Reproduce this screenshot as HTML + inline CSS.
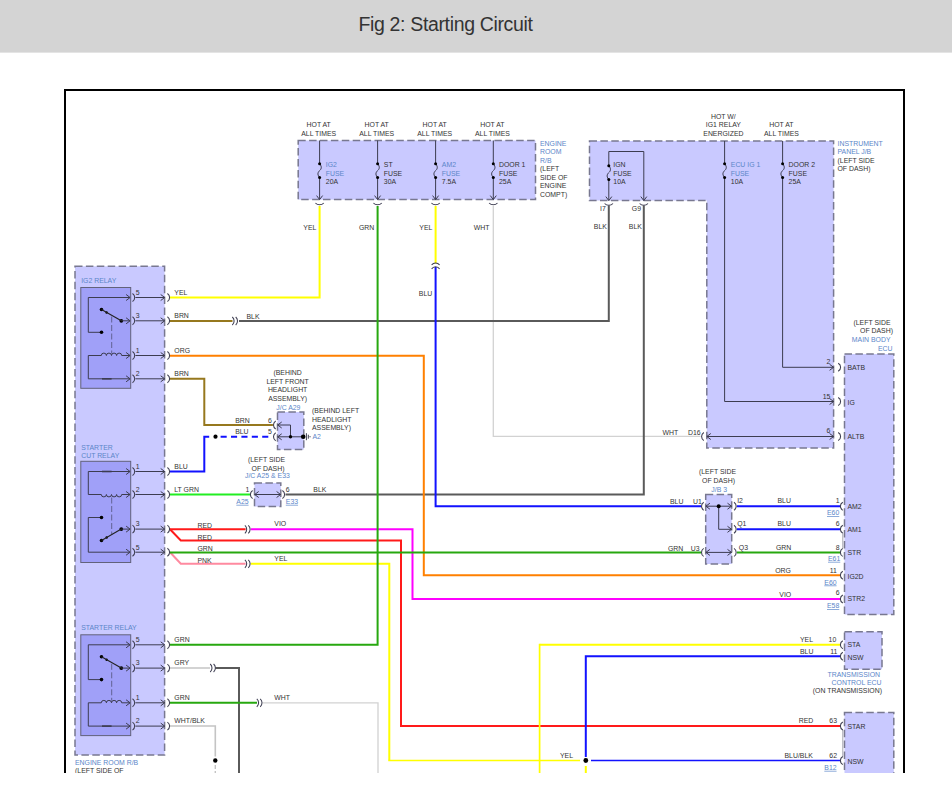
<!DOCTYPE html>
<html><head><meta charset="utf-8"><title>Fig 2: Starting Circuit</title>
<style>
html,body{margin:0;padding:0;background:#fff;}
body{width:952px;height:804px;overflow:hidden;position:relative;font-family:"Liberation Sans",sans-serif;}
#hdr{position:absolute;left:0;top:0;width:952px;height:52px;background:#d4d4d4;border-bottom:1px solid #e4e4e4;}
#ttl{position:absolute;left:0;top:12px;width:891px;text-align:center;font-size:19.5px;color:#333333;letter-spacing:-0.35px;line-height:24px;}
svg{position:absolute;left:0;top:0;}
svg text{font-family:"Liberation Sans",sans-serif;}
</style></head><body>
<div id="hdr"></div><div id="ttl">Fig 2: Starting Circuit</div>
<svg width="952" height="804" viewBox="0 0 952 804">
<defs><clipPath id="c"><rect x="0" y="0" width="952" height="773"/></clipPath></defs>
<g clip-path="url(#c)">
<path d="M65,775 V90 H904 V775" fill="none" stroke="#000" stroke-width="2"/>
<rect x="75" y="266.3" width="89.6" height="488.7" fill="#c9c9ff" stroke="#787890" stroke-width="1.5" stroke-dasharray="7.5 3.4"/>
<rect x="298.2" y="140.5" width="237.3" height="59.1" fill="#c9c9ff" stroke="#787890" stroke-width="1.5" stroke-dasharray="7.5 3.4"/>
<path d="M589.5,141 H833.6 V448 H706.8 V200.6 H589.5 Z" fill="#c9c9ff" stroke="#787890" stroke-width="1.5" stroke-dasharray="7.5 3.4"/>
<rect x="844.5" y="354" width="49.3" height="260.5" fill="#c9c9ff" stroke="#787890" stroke-width="1.5" stroke-dasharray="7.5 3.4"/>
<rect x="705.7" y="494.6" width="26" height="69.4" fill="#c9c9ff" stroke="#787890" stroke-width="1.5" stroke-dasharray="7.5 3.4"/>
<rect x="277.5" y="412" width="26.3" height="37.6" fill="#c9c9ff" stroke="#787890" stroke-width="1.5" stroke-dasharray="7.5 3.4"/>
<rect x="254.5" y="483" width="26.3" height="23.5" fill="#c9c9ff" stroke="#787890" stroke-width="1.5" stroke-dasharray="7.5 3.4"/>
<rect x="844.5" y="631.8" width="37.5" height="37.5" fill="#c9c9ff" stroke="#787890" stroke-width="1.5" stroke-dasharray="7.5 3.4"/>
<rect x="844.5" y="712.5" width="49.3" height="77.5" fill="#c9c9ff" stroke="#787890" stroke-width="1.5" stroke-dasharray="7.5 3.4"/>
<path d="M493.3,206 L493.3,436.4 L700.5,436.4" fill="none" stroke="#d2d2d2" stroke-width="1.3" stroke-linejoin="miter" stroke-linecap="butt"/>
<path d="M608.8,205.5 L608.8,320.9 L239,320.9" fill="none" stroke="#5a5a5a" stroke-width="2" stroke-linejoin="miter" stroke-linecap="butt"/>
<path d="M170,321 L232.5,321" fill="none" stroke="#96781e" stroke-width="2" stroke-linejoin="miter" stroke-linecap="butt"/>
<path d="M643.8,205.5 L643.8,494.5 L285.5,494.5" fill="none" stroke="#5a5a5a" stroke-width="2" stroke-linejoin="miter" stroke-linecap="butt"/>
<path d="M170,355.8 L423.8,355.8 L423.8,575.3 L840.5,575.3" fill="none" stroke="#ff8000" stroke-width="2" stroke-linejoin="miter" stroke-linecap="butt"/>
<path d="M170,378.8 L204.3,378.8 L204.3,425 L272.9,425" fill="none" stroke="#96781e" stroke-width="2" stroke-linejoin="miter" stroke-linecap="butt"/>
<path d="M170,471.5 L204.3,471.5 L204.3,436.7 L209.2,436.7" fill="none" stroke="#1212ff" stroke-width="2" stroke-linejoin="miter" stroke-linecap="butt"/>
<path d="M220.6,436.7 L269.2,436.7" fill="none" stroke="#1212ff" stroke-width="1.9" stroke-linejoin="miter" stroke-linecap="butt" stroke-dasharray="6.1 4.3"/>
<circle cx="215.5" cy="436.7" r="2.1" fill="#000"/>
<path d="M170,494.5 L250.5,494.5" fill="none" stroke="#22ee22" stroke-width="2" stroke-linejoin="miter" stroke-linecap="butt"/>
<path d="M250.8,529.3 L412.5,529.3 L412.5,599 L840.5,599" fill="none" stroke="#ff00ff" stroke-width="2" stroke-linejoin="miter" stroke-linecap="butt"/>
<path d="M170,529.3 L180.8,540.4 L401,540.4 L401,726 L840.5,726" fill="none" stroke="#ff1a1a" stroke-width="2" stroke-linejoin="miter" stroke-linecap="butt"/>
<path d="M170,529.3 L245.6,529.3" fill="none" stroke="#ff1a1a" stroke-width="2" stroke-linejoin="miter" stroke-linecap="butt"/>
<path d="M170,552.3 L180.8,563.8 L245.6,563.8" fill="none" stroke="#ff8aa0" stroke-width="2" stroke-linejoin="miter" stroke-linecap="butt"/>
<path d="M250.8,563.8 L389.3,563.8 L389.3,760.5" fill="none" stroke="#ffff00" stroke-width="2" stroke-linejoin="miter" stroke-linecap="butt"/>
<path d="M388.3,760.5 L580,760.5" fill="none" stroke="#ffff00" stroke-width="1.7" stroke-linejoin="miter" stroke-linecap="butt"/>
<path d="M170,552.4 L701,552.4" fill="none" stroke="#27a80f" stroke-width="2" stroke-linejoin="miter" stroke-linecap="butt"/>
<path d="M319.6,206 L319.6,297.5 L170,297.5" fill="none" stroke="#ffff00" stroke-width="2" stroke-linejoin="miter" stroke-linecap="butt"/>
<path d="M435.6,206 L435.6,263.4" fill="none" stroke="#ffff00" stroke-width="2" stroke-linejoin="miter" stroke-linecap="butt"/>
<path d="M435.6,267 L435.6,506.2 L701,506.2" fill="none" stroke="#1212ff" stroke-width="2" stroke-linejoin="miter" stroke-linecap="butt"/>
<path d="M377.6,206 L377.6,644.8 L170,644.8" fill="none" stroke="#27a80f" stroke-width="2" stroke-linejoin="miter" stroke-linecap="butt"/>
<path d="M170,668 L210,668" fill="none" stroke="#c4c4c4" stroke-width="1.6" stroke-linejoin="miter" stroke-linecap="butt"/>
<path d="M215.5,668 L239,668 L239,773" fill="none" stroke="#5a5a5a" stroke-width="2" stroke-linejoin="miter" stroke-linecap="butt"/>
<path d="M170,702.8 L257,702.8" fill="none" stroke="#27a80f" stroke-width="2" stroke-linejoin="miter" stroke-linecap="butt"/>
<path d="M262.5,702.8 L378,702.8 L378,773" fill="none" stroke="#d2d2d2" stroke-width="1.3" stroke-linejoin="miter" stroke-linecap="butt"/>
<path d="M170,726 L215.3,726 L215.3,756.5" fill="none" stroke="#c4c4c4" stroke-width="1.6" stroke-linejoin="miter" stroke-linecap="butt"/>
<path d="M215.3,765 L215.3,773" fill="none" stroke="#c4c4c4" stroke-width="1.4" stroke-linejoin="miter" stroke-linecap="butt" stroke-dasharray="4 2"/>
<circle cx="215.3" cy="760.5" r="2.2" fill="#000"/>
<path d="M840.5,644.8 L539.6,644.8" fill="none" stroke="#ffff00" stroke-width="2" stroke-linejoin="miter" stroke-linecap="butt"/>
<path d="M539.6,643.8 L539.6,773" fill="none" stroke="#ffff00" stroke-width="1.7" stroke-linejoin="miter" stroke-linecap="butt"/>
<path d="M840.5,656.3 L585.8,656.3 L585.8,757" fill="none" stroke="#1212ff" stroke-width="2" stroke-linejoin="miter" stroke-linecap="butt"/>
<path d="M591,760.5 L840.5,760.5" fill="none" stroke="#1212ff" stroke-width="1.6" stroke-linejoin="miter" stroke-linecap="butt"/>
<path d="M585.8,766 L585.8,773" fill="none" stroke="#ffff00" stroke-width="2" stroke-linejoin="miter" stroke-linecap="butt"/>
<circle cx="585.8" cy="760.5" r="2.4" fill="#000"/>
<path d="M737,506.2 L840.5,506.2" fill="none" stroke="#1212ff" stroke-width="2" stroke-linejoin="miter" stroke-linecap="butt"/>
<path d="M737,529.3 L840.5,529.3" fill="none" stroke="#1212ff" stroke-width="2" stroke-linejoin="miter" stroke-linecap="butt"/>
<path d="M737,552.4 L840.5,552.4" fill="none" stroke="#27a80f" stroke-width="2" stroke-linejoin="miter" stroke-linecap="butt"/>
<rect x="80.8" y="287.5" width="49.9" height="100.8" fill="#a0a0f8" stroke="#62627a" stroke-width="1"/>
<path d="M126.1,294.5 L130.1,297.5 L126.1,300.5" fill="none" stroke="#3c3c50" stroke-width="1" stroke-linejoin="miter" stroke-linecap="butt"/>
<path d="M132.5,293.5 A4.74,4.74 0 0 1 132.5,301.5" fill="none" stroke="#3c3c50" stroke-width="1.05"/>
<path d="M135.4,297.5 L164.4,297.5" fill="none" stroke="#3c3c50" stroke-width="1" stroke-linejoin="miter" stroke-linecap="butt"/>
<path d="M160.7,294.5 L164.7,297.5 L160.7,300.5" fill="none" stroke="#3c3c50" stroke-width="1" stroke-linejoin="miter" stroke-linecap="butt"/>
<path d="M167.4,293.5 A4.74,4.74 0 0 1 167.4,301.5" fill="none" stroke="#3c3c50" stroke-width="1.05"/>
<text x="135.8" y="294.5" fill="#333333" font-size="6.9">5</text>
<path d="M126.1,317.8 L130.1,320.8 L126.1,323.8" fill="none" stroke="#3c3c50" stroke-width="1" stroke-linejoin="miter" stroke-linecap="butt"/>
<path d="M132.5,316.8 A4.74,4.74 0 0 1 132.5,324.8" fill="none" stroke="#3c3c50" stroke-width="1.05"/>
<path d="M135.4,320.8 L164.4,320.8" fill="none" stroke="#3c3c50" stroke-width="1" stroke-linejoin="miter" stroke-linecap="butt"/>
<path d="M160.7,317.8 L164.7,320.8 L160.7,323.8" fill="none" stroke="#3c3c50" stroke-width="1" stroke-linejoin="miter" stroke-linecap="butt"/>
<path d="M167.4,316.8 A4.74,4.74 0 0 1 167.4,324.8" fill="none" stroke="#3c3c50" stroke-width="1.05"/>
<text x="135.8" y="317.8" fill="#333333" font-size="6.9">3</text>
<path d="M126.1,352.5 L130.1,355.5 L126.1,358.5" fill="none" stroke="#3c3c50" stroke-width="1" stroke-linejoin="miter" stroke-linecap="butt"/>
<path d="M132.5,351.5 A4.74,4.74 0 0 1 132.5,359.5" fill="none" stroke="#3c3c50" stroke-width="1.05"/>
<path d="M135.4,355.5 L164.4,355.5" fill="none" stroke="#3c3c50" stroke-width="1" stroke-linejoin="miter" stroke-linecap="butt"/>
<path d="M160.7,352.5 L164.7,355.5 L160.7,358.5" fill="none" stroke="#3c3c50" stroke-width="1" stroke-linejoin="miter" stroke-linecap="butt"/>
<path d="M167.4,351.5 A4.74,4.74 0 0 1 167.4,359.5" fill="none" stroke="#3c3c50" stroke-width="1.05"/>
<text x="135.8" y="352.5" fill="#333333" font-size="6.9">1</text>
<path d="M126.1,375.8 L130.1,378.8 L126.1,381.8" fill="none" stroke="#3c3c50" stroke-width="1" stroke-linejoin="miter" stroke-linecap="butt"/>
<path d="M132.5,374.8 A4.74,4.74 0 0 1 132.5,382.8" fill="none" stroke="#3c3c50" stroke-width="1.05"/>
<path d="M135.4,378.8 L164.4,378.8" fill="none" stroke="#3c3c50" stroke-width="1" stroke-linejoin="miter" stroke-linecap="butt"/>
<path d="M160.7,375.8 L164.7,378.8 L160.7,381.8" fill="none" stroke="#3c3c50" stroke-width="1" stroke-linejoin="miter" stroke-linecap="butt"/>
<path d="M167.4,374.8 A4.74,4.74 0 0 1 167.4,382.8" fill="none" stroke="#3c3c50" stroke-width="1.05"/>
<text x="135.8" y="375.8" fill="#333333" font-size="6.9">2</text>
<path d="M130,297.5 L88.3,297.5 L88.3,332.3 L101.5,332.3" fill="none" stroke="#3c3c50" stroke-width="1" stroke-linejoin="miter" stroke-linecap="butt"/>
<circle cx="101.5" cy="332.3" r="1.8" fill="#000"/>
<circle cx="101.5" cy="309.5" r="1.8" fill="#000"/>
<circle cx="121.3" cy="320.8" r="1.9" fill="#000"/>
<circle cx="106.6" cy="312.5" r="1.2" fill="#000"/>
<path d="M101.5,309.5 L121.3,320.8" fill="none" stroke="#222" stroke-width="1.1" stroke-linejoin="miter" stroke-linecap="butt"/>
<path d="M121.3,320.8 L130,320.8" fill="none" stroke="#3c3c50" stroke-width="1" stroke-linejoin="miter" stroke-linecap="butt"/>
<path d="M111.7,316.5 L111.7,353.5" fill="none" stroke="#50507a" stroke-width="0.8" stroke-linejoin="miter" stroke-linecap="butt" stroke-dasharray="6 2.5"/>
<path d="M88.3,355.5 H101.3 A2.55,2.4 0 0 1 106.4,355.5 A2.55,2.4 0 0 1 111.5,355.5 A2.55,2.4 0 0 1 116.6,355.5 A2.55,2.4 0 0 1 121.7,355.5 H130" fill="none" stroke="#3c3c50" stroke-width="1"/>
<path d="M88.3,355.5 L88.3,378.8 L130,378.8" fill="none" stroke="#3c3c50" stroke-width="1" stroke-linejoin="miter" stroke-linecap="butt"/>
<path d="M102,378.8 L111.6,378.8" fill="none" stroke="#3c3c50" stroke-width="1.6" stroke-linejoin="miter" stroke-linecap="butt"/>
<rect x="80.8" y="634.8" width="49.9" height="100.8" fill="#a0a0f8" stroke="#62627a" stroke-width="1"/>
<path d="M126.1,641.8 L130.1,644.8 L126.1,647.8" fill="none" stroke="#3c3c50" stroke-width="1" stroke-linejoin="miter" stroke-linecap="butt"/>
<path d="M132.5,640.8 A4.74,4.74 0 0 1 132.5,648.8" fill="none" stroke="#3c3c50" stroke-width="1.05"/>
<path d="M135.4,644.8 L164.4,644.8" fill="none" stroke="#3c3c50" stroke-width="1" stroke-linejoin="miter" stroke-linecap="butt"/>
<path d="M160.7,641.8 L164.7,644.8 L160.7,647.8" fill="none" stroke="#3c3c50" stroke-width="1" stroke-linejoin="miter" stroke-linecap="butt"/>
<path d="M167.4,640.8 A4.74,4.74 0 0 1 167.4,648.8" fill="none" stroke="#3c3c50" stroke-width="1.05"/>
<text x="135.8" y="641.8" fill="#333333" font-size="6.9">5</text>
<path d="M126.1,665.1 L130.1,668.1 L126.1,671.1" fill="none" stroke="#3c3c50" stroke-width="1" stroke-linejoin="miter" stroke-linecap="butt"/>
<path d="M132.5,664.1 A4.74,4.74 0 0 1 132.5,672.1" fill="none" stroke="#3c3c50" stroke-width="1.05"/>
<path d="M135.4,668.1 L164.4,668.1" fill="none" stroke="#3c3c50" stroke-width="1" stroke-linejoin="miter" stroke-linecap="butt"/>
<path d="M160.7,665.1 L164.7,668.1 L160.7,671.1" fill="none" stroke="#3c3c50" stroke-width="1" stroke-linejoin="miter" stroke-linecap="butt"/>
<path d="M167.4,664.1 A4.74,4.74 0 0 1 167.4,672.1" fill="none" stroke="#3c3c50" stroke-width="1.05"/>
<text x="135.8" y="665.1" fill="#333333" font-size="6.9">3</text>
<path d="M126.1,699.8 L130.1,702.8 L126.1,705.8" fill="none" stroke="#3c3c50" stroke-width="1" stroke-linejoin="miter" stroke-linecap="butt"/>
<path d="M132.5,698.8 A4.74,4.74 0 0 1 132.5,706.8" fill="none" stroke="#3c3c50" stroke-width="1.05"/>
<path d="M135.4,702.8 L164.4,702.8" fill="none" stroke="#3c3c50" stroke-width="1" stroke-linejoin="miter" stroke-linecap="butt"/>
<path d="M160.7,699.8 L164.7,702.8 L160.7,705.8" fill="none" stroke="#3c3c50" stroke-width="1" stroke-linejoin="miter" stroke-linecap="butt"/>
<path d="M167.4,698.8 A4.74,4.74 0 0 1 167.4,706.8" fill="none" stroke="#3c3c50" stroke-width="1.05"/>
<text x="135.8" y="699.8" fill="#333333" font-size="6.9">1</text>
<path d="M126.1,723.1 L130.1,726.1 L126.1,729.1" fill="none" stroke="#3c3c50" stroke-width="1" stroke-linejoin="miter" stroke-linecap="butt"/>
<path d="M132.5,722.1 A4.74,4.74 0 0 1 132.5,730.1" fill="none" stroke="#3c3c50" stroke-width="1.05"/>
<path d="M135.4,726.1 L164.4,726.1" fill="none" stroke="#3c3c50" stroke-width="1" stroke-linejoin="miter" stroke-linecap="butt"/>
<path d="M160.7,723.1 L164.7,726.1 L160.7,729.1" fill="none" stroke="#3c3c50" stroke-width="1" stroke-linejoin="miter" stroke-linecap="butt"/>
<path d="M167.4,722.1 A4.74,4.74 0 0 1 167.4,730.1" fill="none" stroke="#3c3c50" stroke-width="1.05"/>
<text x="135.8" y="723.1" fill="#333333" font-size="6.9">2</text>
<path d="M130,644.8 L88.3,644.8 L88.3,679.6 L101.5,679.6" fill="none" stroke="#3c3c50" stroke-width="1" stroke-linejoin="miter" stroke-linecap="butt"/>
<circle cx="101.5" cy="679.6" r="1.8" fill="#000"/>
<circle cx="101.5" cy="656.8" r="1.8" fill="#000"/>
<circle cx="121.3" cy="668.1" r="1.9" fill="#000"/>
<circle cx="106.6" cy="659.8" r="1.2" fill="#000"/>
<path d="M101.5,656.8 L121.3,668.1" fill="none" stroke="#222" stroke-width="1.1" stroke-linejoin="miter" stroke-linecap="butt"/>
<path d="M121.3,668.1 L130,668.1" fill="none" stroke="#3c3c50" stroke-width="1" stroke-linejoin="miter" stroke-linecap="butt"/>
<path d="M111.7,663.8 L111.7,700.8" fill="none" stroke="#50507a" stroke-width="0.8" stroke-linejoin="miter" stroke-linecap="butt" stroke-dasharray="6 2.5"/>
<path d="M88.3,702.8 H101.3 A2.55,2.4 0 0 1 106.4,702.8 A2.55,2.4 0 0 1 111.5,702.8 A2.55,2.4 0 0 1 116.6,702.8 A2.55,2.4 0 0 1 121.7,702.8 H130" fill="none" stroke="#3c3c50" stroke-width="1"/>
<path d="M88.3,702.8 L88.3,726.1 L130,726.1" fill="none" stroke="#3c3c50" stroke-width="1" stroke-linejoin="miter" stroke-linecap="butt"/>
<path d="M102,726.1 L111.6,726.1" fill="none" stroke="#3c3c50" stroke-width="1.6" stroke-linejoin="miter" stroke-linecap="butt"/>
<rect x="80.8" y="461.3" width="49.9" height="101.2" fill="#a0a0f8" stroke="#62627a" stroke-width="1"/>
<path d="M126.1,468.5 L130.1,471.5 L126.1,474.5" fill="none" stroke="#3c3c50" stroke-width="1" stroke-linejoin="miter" stroke-linecap="butt"/>
<path d="M132.5,467.5 A4.74,4.74 0 0 1 132.5,475.5" fill="none" stroke="#3c3c50" stroke-width="1.05"/>
<path d="M135.4,471.5 L164.4,471.5" fill="none" stroke="#3c3c50" stroke-width="1" stroke-linejoin="miter" stroke-linecap="butt"/>
<path d="M160.7,468.5 L164.7,471.5 L160.7,474.5" fill="none" stroke="#3c3c50" stroke-width="1" stroke-linejoin="miter" stroke-linecap="butt"/>
<path d="M167.4,467.5 A4.74,4.74 0 0 1 167.4,475.5" fill="none" stroke="#3c3c50" stroke-width="1.05"/>
<text x="135.8" y="468.5" fill="#333333" font-size="6.9">1</text>
<path d="M126.1,491.5 L130.1,494.5 L126.1,497.5" fill="none" stroke="#3c3c50" stroke-width="1" stroke-linejoin="miter" stroke-linecap="butt"/>
<path d="M132.5,490.5 A4.74,4.74 0 0 1 132.5,498.5" fill="none" stroke="#3c3c50" stroke-width="1.05"/>
<path d="M135.4,494.5 L164.4,494.5" fill="none" stroke="#3c3c50" stroke-width="1" stroke-linejoin="miter" stroke-linecap="butt"/>
<path d="M160.7,491.5 L164.7,494.5 L160.7,497.5" fill="none" stroke="#3c3c50" stroke-width="1" stroke-linejoin="miter" stroke-linecap="butt"/>
<path d="M167.4,490.5 A4.74,4.74 0 0 1 167.4,498.5" fill="none" stroke="#3c3c50" stroke-width="1.05"/>
<text x="135.8" y="491.5" fill="#333333" font-size="6.9">2</text>
<path d="M126.1,526.1 L130.1,529.1 L126.1,532.1" fill="none" stroke="#3c3c50" stroke-width="1" stroke-linejoin="miter" stroke-linecap="butt"/>
<path d="M132.5,525.1 A4.74,4.74 0 0 1 132.5,533.1" fill="none" stroke="#3c3c50" stroke-width="1.05"/>
<path d="M135.4,529.1 L164.4,529.1" fill="none" stroke="#3c3c50" stroke-width="1" stroke-linejoin="miter" stroke-linecap="butt"/>
<path d="M160.7,526.1 L164.7,529.1 L160.7,532.1" fill="none" stroke="#3c3c50" stroke-width="1" stroke-linejoin="miter" stroke-linecap="butt"/>
<path d="M167.4,525.1 A4.74,4.74 0 0 1 167.4,533.1" fill="none" stroke="#3c3c50" stroke-width="1.05"/>
<text x="135.8" y="526.1" fill="#333333" font-size="6.9">3</text>
<path d="M126.1,549.2 L130.1,552.2 L126.1,555.2" fill="none" stroke="#3c3c50" stroke-width="1" stroke-linejoin="miter" stroke-linecap="butt"/>
<path d="M132.5,548.2 A4.74,4.74 0 0 1 132.5,556.2" fill="none" stroke="#3c3c50" stroke-width="1.05"/>
<path d="M135.4,552.2 L164.4,552.2" fill="none" stroke="#3c3c50" stroke-width="1" stroke-linejoin="miter" stroke-linecap="butt"/>
<path d="M160.7,549.2 L164.7,552.2 L160.7,555.2" fill="none" stroke="#3c3c50" stroke-width="1" stroke-linejoin="miter" stroke-linecap="butt"/>
<path d="M167.4,548.2 A4.74,4.74 0 0 1 167.4,556.2" fill="none" stroke="#3c3c50" stroke-width="1.05"/>
<text x="135.8" y="550.1" fill="#333333" font-size="6.9">5</text>
<path d="M130,471.5 L88.3,471.5 L88.3,494.5" fill="none" stroke="#3c3c50" stroke-width="1" stroke-linejoin="miter" stroke-linecap="butt"/>
<path d="M102,471.5 L111.6,471.5" fill="none" stroke="#3c3c50" stroke-width="1.6" stroke-linejoin="miter" stroke-linecap="butt"/>
<path d="M88.3,494.5 H101.3 A2.55,2.4 0 0 0 106.4,494.5 A2.55,2.4 0 0 0 111.5,494.5 A2.55,2.4 0 0 0 116.6,494.5 A2.55,2.4 0 0 0 121.7,494.5 H130" fill="none" stroke="#3c3c50" stroke-width="1"/>
<path d="M111.7,497.5 L111.7,534" fill="none" stroke="#50507a" stroke-width="0.8" stroke-linejoin="miter" stroke-linecap="butt" stroke-dasharray="6 2.5"/>
<path d="M101.5,517.5 L88.3,517.5 L88.3,552.2 L130,552.2" fill="none" stroke="#3c3c50" stroke-width="1" stroke-linejoin="miter" stroke-linecap="butt"/>
<circle cx="101.5" cy="517.5" r="1.8" fill="#000"/>
<circle cx="101.5" cy="540.5" r="1.8" fill="#000"/>
<circle cx="121.3" cy="529.1" r="1.9" fill="#000"/>
<circle cx="106.7" cy="537.5" r="1.2" fill="#000"/>
<path d="M101.5,540.5 L121.3,529.1" fill="none" stroke="#222" stroke-width="1.1" stroke-linejoin="miter" stroke-linecap="butt"/>
<path d="M121.3,529.1 L130,529.1" fill="none" stroke="#3c3c50" stroke-width="1" stroke-linejoin="miter" stroke-linecap="butt"/>
<text x="81.2" y="283" fill="#5b86c9" font-size="6.9">IG2 RELAY</text>
<text x="81.2" y="449.5" fill="#5b86c9" font-size="6.9">STARTER</text>
<text x="81.2" y="457.6" fill="#5b86c9" font-size="6.9">CUT RELAY</text>
<text x="81.2" y="629.8" fill="#5b86c9" font-size="6.9">STARTER RELAY</text>
<text x="75" y="764.8" fill="#5b86c9" font-size="6.9">ENGINE ROOM R/B</text>
<text x="75" y="773.2" fill="#333333" font-size="6.9">(LEFT SIDE OF</text>
<path d="M319.6,140.5 L319.6,163.8" fill="none" stroke="#3c3c50" stroke-width="1" stroke-linejoin="miter" stroke-linecap="butt"/>
<path d="M319.6,163.8 C322.8,167.3 320.6,169.8 319.6,170.65 C318.6,171.5 316.40000000000003,174.0 319.6,177.5" fill="none" stroke="#3c3c50" stroke-width="1"/>
<path d="M319.6,177.5 L319.6,199.3" fill="none" stroke="#3c3c50" stroke-width="1" stroke-linejoin="miter" stroke-linecap="butt"/>
<circle cx="319.6" cy="163.8" r="1.5" fill="#000"/>
<circle cx="319.6" cy="177.5" r="1.5" fill="#000"/>
<path d="M316.6,195.6 L319.6,199.6 L322.6,195.6" fill="none" stroke="#3c3c50" stroke-width="1" stroke-linejoin="miter" stroke-linecap="butt"/>
<path d="M315.4,203 A5.80,5.80 0 0 0 323.8,203" fill="none" stroke="#3c3c50" stroke-width="1.05"/>
<path d="M377.6,140.5 L377.6,163.8" fill="none" stroke="#3c3c50" stroke-width="1" stroke-linejoin="miter" stroke-linecap="butt"/>
<path d="M377.6,163.8 C380.8,167.3 378.6,169.8 377.6,170.65 C376.6,171.5 374.40000000000003,174.0 377.6,177.5" fill="none" stroke="#3c3c50" stroke-width="1"/>
<path d="M377.6,177.5 L377.6,199.3" fill="none" stroke="#3c3c50" stroke-width="1" stroke-linejoin="miter" stroke-linecap="butt"/>
<circle cx="377.6" cy="163.8" r="1.5" fill="#000"/>
<circle cx="377.6" cy="177.5" r="1.5" fill="#000"/>
<path d="M374.6,195.6 L377.6,199.6 L380.6,195.6" fill="none" stroke="#3c3c50" stroke-width="1" stroke-linejoin="miter" stroke-linecap="butt"/>
<path d="M373.4,203 A5.80,5.80 0 0 0 381.8,203" fill="none" stroke="#3c3c50" stroke-width="1.05"/>
<path d="M435.6,140.5 L435.6,163.8" fill="none" stroke="#3c3c50" stroke-width="1" stroke-linejoin="miter" stroke-linecap="butt"/>
<path d="M435.6,163.8 C438.8,167.3 436.6,169.8 435.6,170.65 C434.6,171.5 432.40000000000003,174.0 435.6,177.5" fill="none" stroke="#3c3c50" stroke-width="1"/>
<path d="M435.6,177.5 L435.6,199.3" fill="none" stroke="#3c3c50" stroke-width="1" stroke-linejoin="miter" stroke-linecap="butt"/>
<circle cx="435.6" cy="163.8" r="1.5" fill="#000"/>
<circle cx="435.6" cy="177.5" r="1.5" fill="#000"/>
<path d="M432.6,195.6 L435.6,199.6 L438.6,195.6" fill="none" stroke="#3c3c50" stroke-width="1" stroke-linejoin="miter" stroke-linecap="butt"/>
<path d="M431.4,203 A5.80,5.80 0 0 0 439.8,203" fill="none" stroke="#3c3c50" stroke-width="1.05"/>
<path d="M493.3,140.5 L493.3,163.8" fill="none" stroke="#3c3c50" stroke-width="1" stroke-linejoin="miter" stroke-linecap="butt"/>
<path d="M493.3,163.8 C496.5,167.3 494.3,169.8 493.3,170.65 C492.3,171.5 490.1,174.0 493.3,177.5" fill="none" stroke="#3c3c50" stroke-width="1"/>
<path d="M493.3,177.5 L493.3,199.3" fill="none" stroke="#3c3c50" stroke-width="1" stroke-linejoin="miter" stroke-linecap="butt"/>
<circle cx="493.3" cy="163.8" r="1.5" fill="#000"/>
<circle cx="493.3" cy="177.5" r="1.5" fill="#000"/>
<path d="M490.3,195.6 L493.3,199.6 L496.3,195.6" fill="none" stroke="#3c3c50" stroke-width="1" stroke-linejoin="miter" stroke-linecap="butt"/>
<path d="M489.1,203 A5.80,5.80 0 0 0 497.5,203" fill="none" stroke="#3c3c50" stroke-width="1.05"/>
<path d="M608.8,151.5 L608.8,165.8" fill="none" stroke="#3c3c50" stroke-width="1" stroke-linejoin="miter" stroke-linecap="butt"/>
<path d="M608.8,165.8 C612.0,169.3 609.8,171.8 608.8,172.65 C607.8,173.5 605.5999999999999,176.0 608.8,179.5" fill="none" stroke="#3c3c50" stroke-width="1"/>
<path d="M608.8,179.5 L608.8,200.3" fill="none" stroke="#3c3c50" stroke-width="1" stroke-linejoin="miter" stroke-linecap="butt"/>
<circle cx="608.8" cy="165.8" r="1.5" fill="#000"/>
<circle cx="608.8" cy="179.5" r="1.5" fill="#000"/>
<path d="M605.8,196.6 L608.8,200.6 L611.8,196.6" fill="none" stroke="#3c3c50" stroke-width="1" stroke-linejoin="miter" stroke-linecap="butt"/>
<path d="M604.6,203.5 A5.80,5.80 0 0 0 613,203.5" fill="none" stroke="#3c3c50" stroke-width="1.05"/>
<path d="M608.8,151.5 L643.8,151.5 L643.8,200.3" fill="none" stroke="#3c3c50" stroke-width="1" stroke-linejoin="miter" stroke-linecap="butt"/>
<path d="M640.8,196.6 L643.8,200.6 L646.8,196.6" fill="none" stroke="#3c3c50" stroke-width="1" stroke-linejoin="miter" stroke-linecap="butt"/>
<path d="M639.6,203.5 A5.80,5.80 0 0 0 648,203.5" fill="none" stroke="#3c3c50" stroke-width="1.05"/>
<path d="M724.6,141 L724.6,163.8" fill="none" stroke="#3c3c50" stroke-width="1" stroke-linejoin="miter" stroke-linecap="butt"/>
<path d="M724.6,163.8 C727.8000000000001,167.3 725.6,169.8 724.6,170.65 C723.6,171.5 721.4,174.0 724.6,177.5" fill="none" stroke="#3c3c50" stroke-width="1"/>
<path d="M724.6,177.5 L724.6,401.5" fill="none" stroke="#3c3c50" stroke-width="1" stroke-linejoin="miter" stroke-linecap="butt"/>
<circle cx="724.6" cy="163.8" r="1.5" fill="#000"/>
<circle cx="724.6" cy="177.5" r="1.5" fill="#000"/>
<path d="M724.6,401.5 L833.4,401.5" fill="none" stroke="#3c3c50" stroke-width="1" stroke-linejoin="miter" stroke-linecap="butt"/>
<path d="M829.6,398.5 L833.6,401.5 L829.6,404.5" fill="none" stroke="#3c3c50" stroke-width="1" stroke-linejoin="miter" stroke-linecap="butt"/>
<path d="M782.6,141 L782.6,163.8" fill="none" stroke="#3c3c50" stroke-width="1" stroke-linejoin="miter" stroke-linecap="butt"/>
<path d="M782.6,163.8 C785.8000000000001,167.3 783.6,169.8 782.6,170.65 C781.6,171.5 779.4,174.0 782.6,177.5" fill="none" stroke="#3c3c50" stroke-width="1"/>
<path d="M782.6,177.5 L782.6,367.3" fill="none" stroke="#3c3c50" stroke-width="1" stroke-linejoin="miter" stroke-linecap="butt"/>
<circle cx="782.6" cy="163.8" r="1.5" fill="#000"/>
<circle cx="782.6" cy="177.5" r="1.5" fill="#000"/>
<path d="M782.6,367.3 L833.4,367.3" fill="none" stroke="#3c3c50" stroke-width="1" stroke-linejoin="miter" stroke-linecap="butt"/>
<path d="M829.6,364.3 L833.6,367.3 L829.6,370.3" fill="none" stroke="#3c3c50" stroke-width="1" stroke-linejoin="miter" stroke-linecap="butt"/>
<path d="M707,436.5 L833.4,436.5" fill="none" stroke="#3c3c50" stroke-width="1" stroke-linejoin="miter" stroke-linecap="butt"/>
<path d="M710.8,433.5 L706.8,436.5 L710.8,439.5" fill="none" stroke="#3c3c50" stroke-width="1" stroke-linejoin="miter" stroke-linecap="butt"/>
<path d="M829.6,433.5 L833.6,436.5 L829.6,439.5" fill="none" stroke="#3c3c50" stroke-width="1" stroke-linejoin="miter" stroke-linecap="butt"/>
<path d="M703.8,432.5 A4.74,4.74 0 0 0 703.8,440.5" fill="none" stroke="#3c3c50" stroke-width="1.05"/>
<path d="M838.2,363.3 A4.53,4.53 0 0 1 838.2,371.3" fill="none" stroke="#3c3c50" stroke-width="1.05"/>
<path d="M838.2,397.5 A4.53,4.53 0 0 1 838.2,405.5" fill="none" stroke="#3c3c50" stroke-width="1.05"/>
<path d="M838.2,432.5 A4.53,4.53 0 0 1 838.2,440.5" fill="none" stroke="#3c3c50" stroke-width="1.05"/>
<text x="318.7" y="126.9" fill="#333333" font-size="6.9" text-anchor="middle">HOT AT</text>
<text x="318.7" y="135.6" fill="#333333" font-size="6.9" text-anchor="middle">ALL TIMES</text>
<text x="376.7" y="126.9" fill="#333333" font-size="6.9" text-anchor="middle">HOT AT</text>
<text x="376.7" y="135.6" fill="#333333" font-size="6.9" text-anchor="middle">ALL TIMES</text>
<text x="434.7" y="126.9" fill="#333333" font-size="6.9" text-anchor="middle">HOT AT</text>
<text x="434.7" y="135.6" fill="#333333" font-size="6.9" text-anchor="middle">ALL TIMES</text>
<text x="492.4" y="126.9" fill="#333333" font-size="6.9" text-anchor="middle">HOT AT</text>
<text x="492.4" y="135.6" fill="#333333" font-size="6.9" text-anchor="middle">ALL TIMES</text>
<text x="723.4" y="118.5" fill="#333333" font-size="6.9" text-anchor="middle">HOT W/</text>
<text x="723.4" y="126.9" fill="#333333" font-size="6.9" text-anchor="middle">IG1 RELAY</text>
<text x="723.4" y="135.6" fill="#333333" font-size="6.9" text-anchor="middle">ENERGIZED</text>
<text x="781.4" y="126.9" fill="#333333" font-size="6.9" text-anchor="middle">HOT AT</text>
<text x="781.4" y="135.6" fill="#333333" font-size="6.9" text-anchor="middle">ALL TIMES</text>
<text x="325.8" y="166.9" fill="#5b86c9" font-size="6.9">IG2</text>
<text x="325.8" y="175.8" fill="#5b86c9" font-size="6.9">FUSE</text>
<text x="325.8" y="184" fill="#333333" font-size="6.9">20A</text>
<text x="383.8" y="166.9" fill="#333333" font-size="6.9">ST</text>
<text x="383.8" y="175.8" fill="#333333" font-size="6.9">FUSE</text>
<text x="383.8" y="184" fill="#333333" font-size="6.9">30A</text>
<text x="441.8" y="166.9" fill="#5b86c9" font-size="6.9">AM2</text>
<text x="441.8" y="175.8" fill="#5b86c9" font-size="6.9">FUSE</text>
<text x="441.8" y="184" fill="#333333" font-size="6.9">7.5A</text>
<text x="499" y="166.9" fill="#333333" font-size="6.9">DOOR 1</text>
<text x="499" y="175.8" fill="#333333" font-size="6.9">FUSE</text>
<text x="499" y="184" fill="#333333" font-size="6.9">25A</text>
<text x="613.3" y="167" fill="#333333" font-size="6.9">IGN</text>
<text x="613.3" y="175.6" fill="#333333" font-size="6.9">FUSE</text>
<text x="613.3" y="184" fill="#333333" font-size="6.9">10A</text>
<text x="730.8" y="166.9" fill="#5b86c9" font-size="6.9">ECU IG 1</text>
<text x="730.8" y="175.8" fill="#5b86c9" font-size="6.9">FUSE</text>
<text x="730.8" y="184" fill="#333333" font-size="6.9">10A</text>
<text x="788.6" y="166.9" fill="#333333" font-size="6.9">DOOR 2</text>
<text x="788.6" y="175.8" fill="#333333" font-size="6.9">FUSE</text>
<text x="788.6" y="184" fill="#333333" font-size="6.9">25A</text>
<text x="540" y="145.8" fill="#5b86c9" font-size="6.9">ENGINE</text>
<text x="540" y="154.25" fill="#5b86c9" font-size="6.9">ROOM</text>
<text x="540" y="162.7" fill="#5b86c9" font-size="6.9">R/B</text>
<text x="540" y="171.15" fill="#333333" font-size="6.9">(LEFT</text>
<text x="540" y="179.6" fill="#333333" font-size="6.9">SIDE OF</text>
<text x="540" y="188.05" fill="#333333" font-size="6.9">ENGINE</text>
<text x="540" y="196.5" fill="#333333" font-size="6.9">COMPT)</text>
<text x="837.5" y="145.8" fill="#5b86c9" font-size="6.9">INSTRUMENT</text>
<text x="837.5" y="154.3" fill="#5b86c9" font-size="6.9">PANEL J/B</text>
<text x="837.5" y="162.5" fill="#333333" font-size="6.9">(LEFT SIDE</text>
<text x="837.5" y="171.3" fill="#333333" font-size="6.9">OF DASH)</text>
<text x="303.3" y="230" fill="#333333" font-size="6.9">YEL</text>
<text x="359" y="230" fill="#333333" font-size="6.9">GRN</text>
<text x="419.3" y="230" fill="#333333" font-size="6.9">YEL</text>
<text x="473.8" y="230" fill="#333333" font-size="6.9">WHT</text>
<text x="600" y="210.8" fill="#333333" font-size="6.9">I7</text>
<text x="631.8" y="210.8" fill="#333333" font-size="6.9">G9</text>
<text x="593.8" y="229.4" fill="#333333" font-size="6.9">BLK</text>
<text x="628.8" y="229.4" fill="#333333" font-size="6.9">BLK</text>
<text x="418.8" y="296" fill="#333333" font-size="6.9">BLU</text>
<path d="M431.6,265 A5.00,5.00 0 0 1 439.6,265" fill="none" stroke="#3c3c50" stroke-width="1.05"/>
<path d="M431.6,269 A4.63,4.63 0 0 1 439.6,269" fill="none" stroke="#3c3c50" stroke-width="1.05"/>
<text x="174.3" y="294.6" fill="#333333" font-size="6.9">YEL</text>
<text x="174.3" y="318" fill="#333333" font-size="6.9">BRN</text>
<text x="246.5" y="318.8" fill="#333333" font-size="6.9">BLK</text>
<text x="174.3" y="352.6" fill="#333333" font-size="6.9">ORG</text>
<text x="174.3" y="375.8" fill="#333333" font-size="6.9">BRN</text>
<text x="174.3" y="468.6" fill="#333333" font-size="6.9">BLU</text>
<text x="174.3" y="491.7" fill="#333333" font-size="6.9">LT GRN</text>
<text x="197.5" y="527.9" fill="#333333" font-size="6.9">RED</text>
<text x="197.5" y="540.1" fill="#333333" font-size="6.9">RED</text>
<text x="197.5" y="550.5" fill="#333333" font-size="6.9">GRN</text>
<text x="197.5" y="562.6" fill="#333333" font-size="6.9">PNK</text>
<text x="274.3" y="525.6" fill="#333333" font-size="6.9">VIO</text>
<text x="274.3" y="560.8" fill="#333333" font-size="6.9">YEL</text>
<text x="174.3" y="641.8" fill="#333333" font-size="6.9">GRN</text>
<text x="174.3" y="664.9" fill="#333333" font-size="6.9">GRY</text>
<text x="174.3" y="699.8" fill="#333333" font-size="6.9">GRN</text>
<text x="174.3" y="722.7" fill="#333333" font-size="6.9">WHT/BLK</text>
<text x="274.3" y="699.8" fill="#333333" font-size="6.9">WHT</text>
<path d="M232.3,317 A5.34,5.34 0 0 1 232.3,325" fill="none" stroke="#3c3c50" stroke-width="1.05"/>
<path d="M235.7,317 A5.34,5.34 0 0 1 235.7,325" fill="none" stroke="#3c3c50" stroke-width="1.05"/>
<path d="M244.9,525.3 A5.34,5.34 0 0 1 244.9,533.3" fill="none" stroke="#3c3c50" stroke-width="1.05"/>
<path d="M248.3,525.3 A5.34,5.34 0 0 1 248.3,533.3" fill="none" stroke="#3c3c50" stroke-width="1.05"/>
<path d="M244.9,559.8 A5.34,5.34 0 0 1 244.9,567.8" fill="none" stroke="#3c3c50" stroke-width="1.05"/>
<path d="M248.3,559.8 A5.34,5.34 0 0 1 248.3,567.8" fill="none" stroke="#3c3c50" stroke-width="1.05"/>
<path d="M210.2,664 A5.34,5.34 0 0 1 210.2,672" fill="none" stroke="#3c3c50" stroke-width="1.05"/>
<path d="M213.6,664 A5.34,5.34 0 0 1 213.6,672" fill="none" stroke="#3c3c50" stroke-width="1.05"/>
<path d="M256.8,698.8 A5.34,5.34 0 0 1 256.8,706.8" fill="none" stroke="#3c3c50" stroke-width="1.05"/>
<path d="M260.2,698.8 A5.34,5.34 0 0 1 260.2,706.8" fill="none" stroke="#3c3c50" stroke-width="1.05"/>
<path d="M275.7,421 A4.74,4.74 0 0 0 275.7,429" fill="none" stroke="#3c3c50" stroke-width="1.05"/>
<path d="M275.7,432.7 A4.74,4.74 0 0 0 275.7,440.7" fill="none" stroke="#3c3c50" stroke-width="1.05"/>
<path d="M277.7,425 L290.5,425 L290.5,436.8" fill="none" stroke="#3c3c50" stroke-width="1" stroke-linejoin="miter" stroke-linecap="butt"/>
<path d="M281.7,422 L277.7,425 L281.7,428" fill="none" stroke="#3c3c50" stroke-width="1" stroke-linejoin="miter" stroke-linecap="butt"/>
<path d="M277.7,436.8 L304,436.8" fill="none" stroke="#3c3c50" stroke-width="1" stroke-linejoin="miter" stroke-linecap="butt"/>
<path d="M281.7,433.8 L277.7,436.8 L281.7,439.8" fill="none" stroke="#3c3c50" stroke-width="1" stroke-linejoin="miter" stroke-linecap="butt"/>
<circle cx="290.5" cy="436.7" r="1.7" fill="#000"/>
<circle cx="303.2" cy="436.7" r="2.3" fill="#000"/>
<path d="M306.4,433.2 L306.4,440.2" fill="none" stroke="#3c3c50" stroke-width="1" stroke-linejoin="miter" stroke-linecap="butt"/>
<path d="M308.3,434.7 L308.3,438.7" fill="none" stroke="#3c3c50" stroke-width="1" stroke-linejoin="miter" stroke-linecap="butt"/>
<path d="M310,436.1 L310,437.3" fill="none" stroke="#3c3c50" stroke-width="1" stroke-linejoin="miter" stroke-linecap="butt"/>
<text x="235.2" y="422.6" fill="#333333" font-size="6.9">BRN</text>
<text x="235.2" y="433.9" fill="#333333" font-size="6.9">BLU</text>
<text x="268" y="422.6" fill="#333333" font-size="6.9">6</text>
<text x="268" y="433.9" fill="#333333" font-size="6.9">5</text>
<text x="287.6" y="375.1" fill="#333333" font-size="6.9" text-anchor="middle">(BEHIND</text>
<text x="287.6" y="383.6" fill="#333333" font-size="6.9" text-anchor="middle">LEFT FRONT</text>
<text x="287.6" y="392.1" fill="#333333" font-size="6.9" text-anchor="middle">HEADLIGHT</text>
<text x="287.6" y="400.7" fill="#333333" font-size="6.9" text-anchor="middle">ASSEMBLY)</text>
<text x="276.3" y="409.5" fill="#5b86c9" font-size="6.9">J/C A29</text>
<text x="312" y="412.8" fill="#333333" font-size="6.9">(BEHIND LEFT</text>
<text x="312" y="422.3" fill="#333333" font-size="6.9">HEADLIGHT</text>
<text x="312" y="429.8" fill="#333333" font-size="6.9">ASSEMBLY)</text>
<text x="312.5" y="438.6" fill="#5b86c9" font-size="6.9">A2</text>
<path d="M252.6,490.5 A4.74,4.74 0 0 0 252.6,498.5" fill="none" stroke="#3c3c50" stroke-width="1.05"/>
<path d="M282.4,490.5 A4.74,4.74 0 0 1 282.4,498.5" fill="none" stroke="#3c3c50" stroke-width="1.05"/>
<path d="M254.7,494.5 L280.6,494.5" fill="none" stroke="#3c3c50" stroke-width="1" stroke-linejoin="miter" stroke-linecap="butt"/>
<path d="M258.7,491.5 L254.7,494.5 L258.7,497.5" fill="none" stroke="#3c3c50" stroke-width="1" stroke-linejoin="miter" stroke-linecap="butt"/>
<path d="M276.6,491.5 L280.6,494.5 L276.6,497.5" fill="none" stroke="#3c3c50" stroke-width="1" stroke-linejoin="miter" stroke-linecap="butt"/>
<text x="266.5" y="462" fill="#333333" font-size="6.9" text-anchor="middle">(LEFT SIDE</text>
<text x="268" y="470.6" fill="#333333" font-size="6.9" text-anchor="middle">OF DASH)</text>
<text x="245" y="477.6" fill="#5b86c9" font-size="6.9">J/C A25 &amp; E33</text>
<text x="245.6" y="491.7" fill="#333333" font-size="6.9">1</text>
<text x="285.8" y="491.7" fill="#333333" font-size="6.9">6</text>
<text x="313.3" y="491.7" fill="#333333" font-size="6.9">BLK</text>
<text x="236.3" y="503.8" fill="#5b86c9" font-size="6.9" text-decoration="underline">A25</text>
<text x="285.8" y="503.8" fill="#5b86c9" font-size="6.9" text-decoration="underline">E33</text>
<path d="M703.7,502.2 A4.74,4.74 0 0 0 703.7,510.2" fill="none" stroke="#3c3c50" stroke-width="1.05"/>
<path d="M703.7,548.4 A4.74,4.74 0 0 0 703.7,556.4" fill="none" stroke="#3c3c50" stroke-width="1.05"/>
<path d="M734,502.2 A4.74,4.74 0 0 1 734,510.2" fill="none" stroke="#3c3c50" stroke-width="1.05"/>
<path d="M734,525.3 A4.74,4.74 0 0 1 734,533.3" fill="none" stroke="#3c3c50" stroke-width="1.05"/>
<path d="M734,548.4 A4.74,4.74 0 0 1 734,556.4" fill="none" stroke="#3c3c50" stroke-width="1.05"/>
<path d="M705.9,506.2 L731.5,506.2" fill="none" stroke="#3c3c50" stroke-width="1" stroke-linejoin="miter" stroke-linecap="butt"/>
<path d="M709.9,503.2 L705.9,506.2 L709.9,509.2" fill="none" stroke="#3c3c50" stroke-width="1" stroke-linejoin="miter" stroke-linecap="butt"/>
<path d="M727.5,503.2 L731.5,506.2 L727.5,509.2" fill="none" stroke="#3c3c50" stroke-width="1" stroke-linejoin="miter" stroke-linecap="butt"/>
<path d="M718.7,506.2 L718.7,529.3 L731.5,529.3" fill="none" stroke="#3c3c50" stroke-width="1" stroke-linejoin="miter" stroke-linecap="butt"/>
<path d="M727.5,526.3 L731.5,529.3 L727.5,532.3" fill="none" stroke="#3c3c50" stroke-width="1" stroke-linejoin="miter" stroke-linecap="butt"/>
<path d="M705.9,552.4 L731.5,552.4" fill="none" stroke="#3c3c50" stroke-width="1" stroke-linejoin="miter" stroke-linecap="butt"/>
<path d="M709.9,549.4 L705.9,552.4 L709.9,555.4" fill="none" stroke="#3c3c50" stroke-width="1" stroke-linejoin="miter" stroke-linecap="butt"/>
<path d="M727.5,549.4 L731.5,552.4 L727.5,555.4" fill="none" stroke="#3c3c50" stroke-width="1" stroke-linejoin="miter" stroke-linecap="butt"/>
<circle cx="718.7" cy="506.2" r="2" fill="#000"/>
<text x="717.5" y="473.8" fill="#333333" font-size="6.9" text-anchor="middle">(LEFT SIDE</text>
<text x="718.5" y="482.8" fill="#333333" font-size="6.9" text-anchor="middle">OF DASH)</text>
<text x="711.3" y="491.6" fill="#5b86c9" font-size="6.9">J/B 3</text>
<text x="693" y="503.9" fill="#333333" font-size="6.9">U1</text>
<text x="690.8" y="550.6" fill="#333333" font-size="6.9">U3</text>
<text x="670" y="503.9" fill="#333333" font-size="6.9">BLU</text>
<text x="668" y="550.6" fill="#333333" font-size="6.9">GRN</text>
<text x="662.5" y="434.8" fill="#333333" font-size="6.9">WHT</text>
<text x="688" y="434.8" fill="#333333" font-size="6.9">D16</text>
<text x="737.2" y="503" fill="#333333" font-size="6.9">I2</text>
<text x="737.2" y="526.1" fill="#333333" font-size="6.9">Q1</text>
<text x="738.8" y="549.7" fill="#333333" font-size="6.9">Q3</text>
<text x="777.5" y="503" fill="#333333" font-size="6.9">BLU</text>
<text x="777.5" y="526.1" fill="#333333" font-size="6.9">BLU</text>
<text x="776" y="549.7" fill="#333333" font-size="6.9">GRN</text>
<text x="775.2" y="572.7" fill="#333333" font-size="6.9">ORG</text>
<text x="779.3" y="596.6" fill="#333333" font-size="6.9">VIO</text>
<path d="M842.8,502.2 A4.53,4.53 0 0 0 842.8,510.2" fill="none" stroke="#3c3c50" stroke-width="1.05"/>
<path d="M842.8,525.3 A4.53,4.53 0 0 0 842.8,533.3" fill="none" stroke="#3c3c50" stroke-width="1.05"/>
<path d="M842.8,548.4 A4.53,4.53 0 0 0 842.8,556.4" fill="none" stroke="#3c3c50" stroke-width="1.05"/>
<path d="M842.8,571.3 A4.53,4.53 0 0 0 842.8,579.3" fill="none" stroke="#3c3c50" stroke-width="1.05"/>
<path d="M842.8,595 A4.53,4.53 0 0 0 842.8,603" fill="none" stroke="#3c3c50" stroke-width="1.05"/>
<path d="M842.8,533.3 L842.8,548.4" fill="none" stroke="#9a9aa8" stroke-width="0.9" stroke-linejoin="miter" stroke-linecap="butt"/>
<path d="M842.8,730 L842.8,756.5" fill="none" stroke="#9a9aa8" stroke-width="0.9" stroke-linejoin="miter" stroke-linecap="butt"/>
<text x="890.5" y="325.3" fill="#333333" font-size="6.9" text-anchor="end">(LEFT SIDE</text>
<text x="893" y="333.2" fill="#333333" font-size="6.9" text-anchor="end">OF DASH)</text>
<text x="890.5" y="341.8" fill="#5b86c9" font-size="6.9" text-anchor="end">MAIN BODY</text>
<text x="892.5" y="350.5" fill="#5b86c9" font-size="6.9" text-anchor="end">ECU</text>
<text x="847.5" y="369.8" fill="#333333" font-size="6.9">BATB</text>
<text x="847.5" y="404.8" fill="#333333" font-size="6.9">IG</text>
<text x="847.5" y="439" fill="#333333" font-size="6.9">ALTB</text>
<text x="847.5" y="508.8" fill="#333333" font-size="6.9">AM2</text>
<text x="847.5" y="531.8" fill="#333333" font-size="6.9">AM1</text>
<text x="847.5" y="555" fill="#333333" font-size="6.9">STR</text>
<text x="847.5" y="578.8" fill="#333333" font-size="6.9">IG2D</text>
<text x="847.5" y="601.3" fill="#333333" font-size="6.9">STR2</text>
<text x="830.3" y="363.6" fill="#333333" font-size="6.9" text-anchor="end">2</text>
<text x="830.3" y="398.6" fill="#333333" font-size="6.9" text-anchor="end">15</text>
<text x="830.3" y="432.8" fill="#333333" font-size="6.9" text-anchor="end">6</text>
<text x="839.5" y="503" fill="#333333" font-size="6.9" text-anchor="end">1</text>
<text x="839.5" y="526.1" fill="#333333" font-size="6.9" text-anchor="end">6</text>
<text x="839.5" y="549.7" fill="#333333" font-size="6.9" text-anchor="end">8</text>
<text x="836.8" y="572.7" fill="#333333" font-size="6.9" text-anchor="end">11</text>
<text x="839.5" y="594.6" fill="#333333" font-size="6.9" text-anchor="end">6</text>
<text x="827" y="515" fill="#5b86c9" font-size="6.9" text-decoration="underline">E60</text>
<text x="828" y="560.8" fill="#5b86c9" font-size="6.9" text-decoration="underline">E61</text>
<text x="824.3" y="584.5" fill="#5b86c9" font-size="6.9" text-decoration="underline">E60</text>
<text x="827" y="608" fill="#5b86c9" font-size="6.9" text-decoration="underline">E58</text>
<path d="M842.8,640.8 A4.53,4.53 0 0 0 842.8,648.8" fill="none" stroke="#3c3c50" stroke-width="1.05"/>
<path d="M842.8,652.3 A4.53,4.53 0 0 0 842.8,660.3" fill="none" stroke="#3c3c50" stroke-width="1.05"/>
<text x="800" y="641.8" fill="#333333" font-size="6.9">YEL</text>
<text x="800" y="653.5" fill="#333333" font-size="6.9">BLU</text>
<text x="828.6" y="641.8" fill="#333333" font-size="6.9">10</text>
<text x="830.2" y="653.5" fill="#333333" font-size="6.9">11</text>
<text x="847.5" y="646.8" fill="#333333" font-size="6.9">STA</text>
<text x="847.5" y="659.8" fill="#333333" font-size="6.9">NSW</text>
<text x="880" y="676.8" fill="#5b86c9" font-size="6.9" text-anchor="end">TRANSMISSION</text>
<text x="881.5" y="684.8" fill="#5b86c9" font-size="6.9" text-anchor="end">CONTROL ECU</text>
<text x="882" y="692.6" fill="#333333" font-size="6.9" text-anchor="end">(ON TRANSMISSION)</text>
<path d="M842.8,722 A4.53,4.53 0 0 0 842.8,730" fill="none" stroke="#3c3c50" stroke-width="1.05"/>
<path d="M842.8,756.5 A4.53,4.53 0 0 0 842.8,764.5" fill="none" stroke="#3c3c50" stroke-width="1.05"/>
<text x="798.8" y="722.6" fill="#333333" font-size="6.9">RED</text>
<text x="829.3" y="722.6" fill="#333333" font-size="6.9">63</text>
<text x="784.5" y="758.3" fill="#333333" font-size="6.9">BLU/BLK</text>
<text x="829.3" y="758.3" fill="#333333" font-size="6.9">62</text>
<text x="847.5" y="728.8" fill="#333333" font-size="6.9">STAR</text>
<text x="847.5" y="763.6" fill="#333333" font-size="6.9">NSW</text>
<text x="824.3" y="769.8" fill="#5b86c9" font-size="6.9" text-decoration="underline">B12</text>
<text x="560" y="757.5" fill="#333333" font-size="6.9">YEL</text>
</g>
</svg>
</body></html>
